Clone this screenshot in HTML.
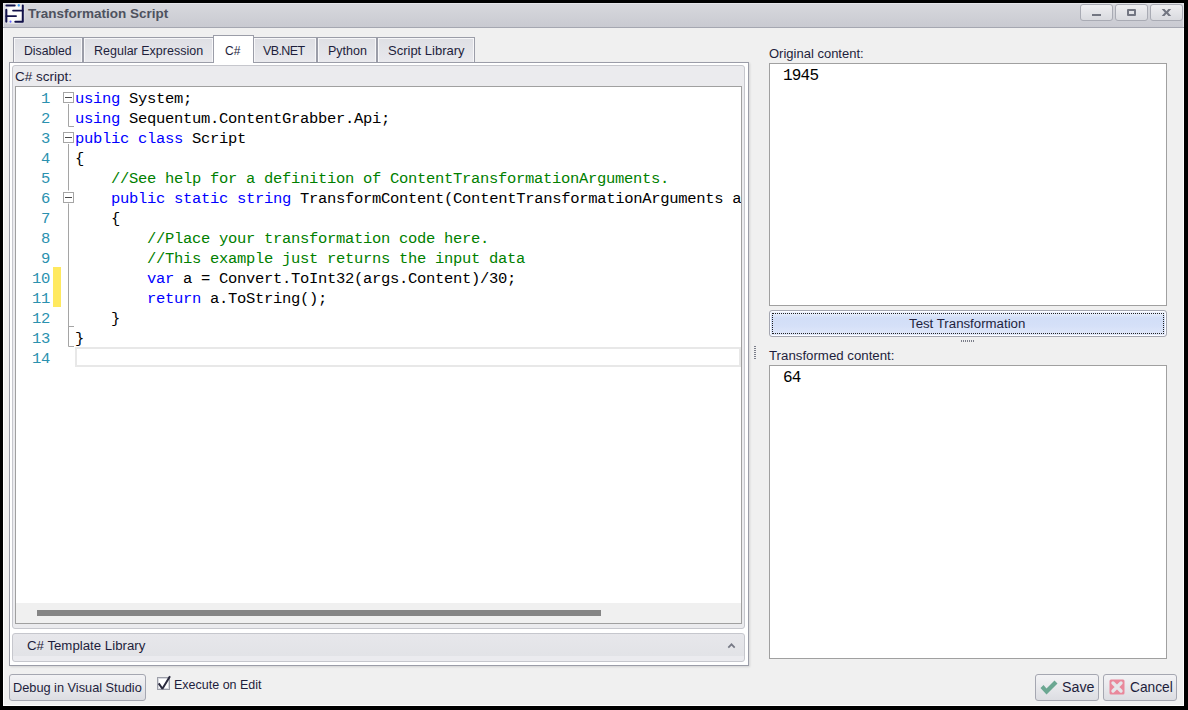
<!DOCTYPE html>
<html><head><meta charset="utf-8">
<style>
*{box-sizing:border-box;margin:0;padding:0}
html,body{width:1188px;height:710px;overflow:hidden;background:#000}
body{position:relative;font-family:"Liberation Sans",sans-serif;font-size:13px;color:#1e1e3c}
.a{position:absolute}
.t{position:absolute;white-space:pre;line-height:16px}
#win{left:3px;top:3px;width:1181px;height:703px;background:#f0f0f0;border:1px solid #fff;border-top:none}
#title{left:3px;top:3px;width:1181px;height:25px;background:linear-gradient(#e3e4e8 0,#e3e4e8 1px,#d7d8dd 1px,#c9cad1);border-bottom:1px solid #a5a7b1;box-shadow:inset 1px 0 0 #e6e7ec,inset -1px 0 0 #e6e7ec}
.tbtn{top:4px;width:33px;height:17px;border:1px solid #a9abb4;border-radius:3px;background:linear-gradient(#eeeef1,#d9dadf)}
.tab{top:37px;height:25px;border:1px solid #9b9da8;border-bottom:none;background:linear-gradient(#dedfe4,#e9e9ed);box-shadow:inset 1px 1px 0 #f7f7f9,inset -1px 0 0 #f7f7f9}
.code{position:absolute;font-family:"Liberation Mono",monospace;font-size:15.5px;letter-spacing:-0.3px;line-height:20px;white-space:pre;color:#000}
.kw{color:#0000ff}.cm{color:#008000}
.ln{position:absolute;font-family:"Liberation Mono",monospace;font-size:15.5px;letter-spacing:-0.3px;line-height:20px;color:#2b91af;text-align:right;width:40px;left:10px}
.btn{border:1px solid #a5a7b1;border-radius:3px;background:linear-gradient(#f3f3f5,#dcdde2)}
</style></head><body>
<div id="win" class="a"></div>
<div id="title" class="a"></div>
<!-- app icon -->
<svg class="a" style="left:0;top:0" width="30" height="30" viewBox="0 0 30 30">
<defs><radialGradient id="ig" cx="0.5" cy="0.5" r="0.6"><stop offset="0.55" stop-color="#fff" stop-opacity="0.95"/><stop offset="1" stop-color="#fff" stop-opacity="0.15"/></radialGradient></defs>
<rect x="4.5" y="3.5" width="20" height="20.5" fill="url(#ig)"/>
<g stroke="#12124a" fill="none" stroke-linecap="round">
<path d="M6.4 5.4H14.7" stroke-width="2"/><path d="M22.8 5.4V21.85H15.3" stroke-width="2" stroke-linejoin="round"/><path d="M13 10.6H22.8" stroke-width="1.7"/><path d="M6.3 9.9V21.6" stroke-width="2.1"/><path d="M6.3 16.05H16.1" stroke-width="1.7"/>
</g>
<ellipse cx="18.8" cy="5.35" rx="1.1" ry="1.3" fill="#3d9df0"/><ellipse cx="10.5" cy="21.6" rx="0.95" ry="1.2" fill="#6262ff"/>
</svg>
<div class="t" style="left:28px;top:6px;font-weight:bold;font-size:13.5px;color:#4e525e">Transformation Script</div>
<!-- title buttons -->
<div class="a tbtn" style="left:1080px"></div>
<div class="a tbtn" style="left:1115px"></div>
<div class="a tbtn" style="left:1150px"></div>
<div class="a" style="left:1092px;top:14px;width:9px;height:2px;background:#737682"></div>
<div class="a" style="left:1127px;top:9px;width:9px;height:7px;border:2px solid #737682;border-radius:1px"></div>
<svg class="a" style="left:1150px;top:3px" width="34" height="20"><path d="M11.7 6H14.5L16.45 8.2L18.4 6H21.2L18.1 9.45L21.2 12.9H18.4L16.45 10.7L14.5 12.9H11.7L14.8 9.45Z" fill="#737682"/></svg>

<!-- panel -->
<div class="a" style="left:9px;top:62px;width:740px;height:604px;border:1px solid #9b9da8;background:#fff;box-shadow:1px 1px 2px rgba(0,0,0,0.12)"></div>
<!-- tabs -->
<div class="a tab" style="left:13px;width:70px"></div>
<div class="a tab" style="left:83px;width:131px"></div>
<div class="a tab" style="left:253px;width:64px"></div>
<div class="a tab" style="left:317px;width:60px"></div>
<div class="a tab" style="left:377px;width:98px"></div>
<div class="a" style="left:213px;top:35px;width:41px;height:28px;border:1px solid #9b9da8;border-bottom:none;background:#fff"></div>
<div class="t" style="left:24px;top:42.5px;font-size:12.25px">Disabled</div>
<div class="t" style="left:94px;top:42.5px;font-size:12.5px">Regular Expression</div>
<div class="t" style="left:225px;top:42.5px;font-size:12px">C#</div>
<div class="t" style="left:263px;top:42.5px;font-size:12.5px;letter-spacing:-0.6px">VB.NET</div>
<div class="t" style="left:328px;top:42.5px;font-size:12.5px">Python</div>
<div class="t" style="left:388px;top:42.5px">Script Library</div>

<!-- group box -->
<div class="a" style="left:12px;top:65px;width:733px;height:564px;border:1px solid #c6c7cd;border-radius:3px;background:#ebebee"></div>
<div class="t" style="left:15px;top:69px;font-size:13.5px">C# script:</div>
<!-- editor -->
<div class="a" style="left:15px;top:86px;width:727px;height:538px;border:1px solid #a0a0a0;background:#fff;overflow:hidden">
  <div class="a" style="left:0;top:516px;width:725px;height:20px;background:#f0f0f0"></div>
  <div class="a" style="left:21px;top:523px;width:564px;height:6px;background:#858585"></div>
</div>
<div class="a" style="left:75px;top:347px;width:666px;height:20px;border:2px solid #e8e8e8"></div>
<div class="a" style="left:53px;top:267px;width:8px;height:40px;background:#ffe95f"></div>
<div class="ln" style="top:88.5px">1<br>2<br>3<br>4<br>5<br>6<br>7<br>8<br>9<br>10<br>11<br>12<br>13<br>14</div>
<!-- fold markers -->
<svg class="a" style="left:0;top:0" width="80" height="370">
<g fill="none" stroke="#a5a5a5" stroke-width="1">
<path d="M68.5 104V126.5H74M68.5 144V190.5M68.5 203.5V346.5H74M68.5 326.5H74"/>
<rect x="63.5" y="92.5" width="10" height="10" fill="#fff"/>
<rect x="63.5" y="132.5" width="10" height="10" fill="#fff"/>
<rect x="63.5" y="192.5" width="10" height="10" fill="#fff"/>
</g>
<g stroke="#4a4a4a" stroke-width="1"><path d="M65 97.5H72M65 137.5H72M65 197.5H72"/></g>
</svg>
<div class="code" style="left:75px;top:88.5px;width:666px;height:270px;overflow:hidden"><span class="kw">using</span> System;
<span class="kw">using</span> Sequentum.ContentGrabber.Api;
<span class="kw">public</span> <span class="kw">class</span> Script
{
    <span class="cm">//See help for a definition of ContentTransformationArguments.</span>
    <span class="kw">public</span> <span class="kw">static</span> <span class="kw">string</span> TransformContent(ContentTransformationArguments args)
    {
        <span class="cm">//Place your transformation code here.</span>
        <span class="cm">//This example just returns the input data</span>
        <span class="kw">var</span> a = Convert.ToInt32(args.Content)/30;
        <span class="kw">return</span> a.ToString();
    }
}
</div>

<!-- template library bar -->
<div class="a" style="left:12px;top:633px;width:733px;height:29px;border:1px solid #c6c7cd;border-radius:3px;background:linear-gradient(#e7e7eb,#e2e3e7 82%,#ebebef 82%)"></div>
<div class="t" style="left:27px;top:638px;font-size:13.25px">C# Template Library</div>
<svg class="a" style="left:720px;top:636px" width="24" height="20"><path d="M8.3 11.6L11.5 8.3L14.7 11.6" stroke="#767985" stroke-width="1.7" fill="none"/></svg>

<!-- right side -->
<div class="t" style="left:769px;top:46px">Original content:</div>
<div class="a" style="left:769px;top:63px;width:398px;height:243px;border:1px solid #a0a0a0;background:#fff"></div>
<div class="code" style="left:783px;top:65.5px;font-size:16px;letter-spacing:-0.8px">1945</div>
<div class="a btn" style="left:769px;top:310px;width:398px;height:27px;background:linear-gradient(#f3f6fd 0,#d2def7 28%,#d5e0f8 60%,#e2e9fa 100%);border-color:#a5a7b1;box-shadow:inset 0 0 0 1px #fbfcff"></div>
<div class="a" style="left:772px;top:313px;width:392px;height:21px;border:1px dotted #222"></div>
<div class="t" style="left:909px;top:316px;font-size:13.25px">Test Transformation</div>
<div class="t" style="left:769px;top:348px;font-size:13.25px">Transformed content:</div>
<div class="a" style="left:769px;top:365px;width:398px;height:294px;border:1px solid #a0a0a0;background:#fff"></div>
<div class="code" style="left:783px;top:367.5px;font-size:16px;letter-spacing:-0.8px">64</div>
<div class="a" style="left:754px;top:346px;width:2px;height:13px;background:repeating-linear-gradient(#7b7e8a 0 1px,transparent 1px 2px)"></div>
<div class="a" style="left:961px;top:340px;width:14px;height:2px;background:repeating-linear-gradient(90deg,#7b7e8a 0 1px,transparent 1px 2px)"></div>

<!-- bottom -->
<div class="a btn" style="left:9px;top:674px;width:137px;height:27px"></div>
<div class="t" style="left:13px;top:679.5px;font-size:12.75px">Debug in Visual Studio</div>
<div class="a" style="left:157px;top:677px;width:13px;height:13px;border:1px solid #9c9ea8;background:#fff;box-shadow:inset 0 0 0 1px #d8dae0"></div>
<svg class="a" style="left:150px;top:670px" width="30" height="25"><path d="M8.7 13.4L12.4 18.7L20 6.2" stroke="#2a2a3e" stroke-width="2" fill="none" stroke-linejoin="bevel"/></svg>
<div class="t" style="left:174px;top:677px;font-size:12.5px">Execute on Edit</div>
<div class="a btn" style="left:1035px;top:674px;width:64px;height:27px"></div>
<svg class="a" style="left:1030px;top:670px" width="40" height="30"><path d="M10.5 18L13.5 15L16.5 18.5L24.5 10.5L27.5 13.5L16.5 24.5Z" fill="#6ba792"/></svg>
<div class="t" style="left:1062px;top:679px;font-size:14.25px">Save</div>
<div class="a btn" style="left:1103px;top:674px;width:74px;height:27px"></div>
<svg class="a" style="left:1100px;top:670px" width="30" height="30"><rect x="9.5" y="9.5" width="15" height="15" rx="1.5" fill="#e9889b"/><path d="M13 13L21 21M21 13L13 21" stroke="#e6e6ea" stroke-width="3.4" stroke-linecap="round"/></svg>
<div class="t" style="left:1130px;top:680px;font-size:13.75px">Cancel</div>
</body></html>
